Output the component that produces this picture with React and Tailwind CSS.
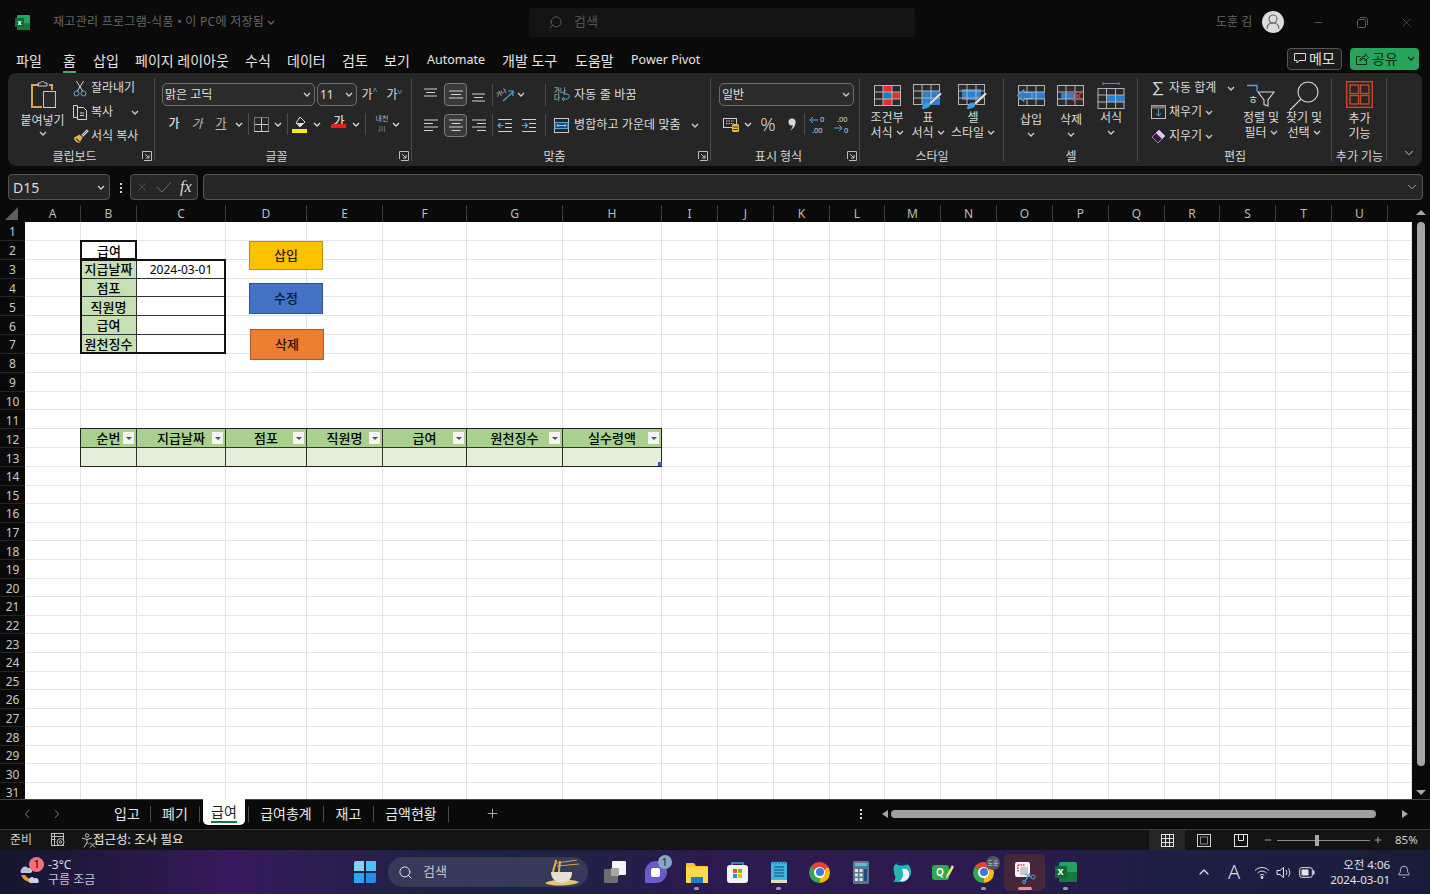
import React from 'react';
import { Search, Bell, ChevronUp, X, Minus, Plus, ChevronLeft, ChevronRight, ChevronDown } from 'lucide-react';

const Chev = ({ className = '' }) => (
  <svg width="8" height="5" viewBox="0 0 8 5" className={className} fill="none" stroke="currentColor" strokeWidth="1.3"><path d="M1 1l3 3 3-3" /></svg>
);
const Sep = ({ className = '' }) => <div className={`w-px h-[22px] bg-[#4c4c4c] shrink-0 ${className}`} />;
const Launcher = () => (
  <svg width="10" height="10" viewBox="0 0 10 10" className="absolute right-[3px] top-[5px]" fill="none" stroke="#bdbdbd"><path d="M.5 8V.5H9.5V9.5H2" /><path d="M3 3l4 4M7 4v3H4" /></svg>
);
const Slot = ({ w, children, className = '' }) => <div className={`flex items-center justify-center shrink-0 ${w} ${className}`}>{children}</div>;

function Group({ w, label, launcher, children, bodyClass = '', last }) {
  return (
    <div className={`shrink-0 h-full relative flex flex-col ${w}`}>
      <div className={`h-[73px] ${bodyClass}`}>{children}</div>
      <div className={`relative h-5 pt-px text-[12px] leading-[20px] text-center text-[#d6d6d6] ${launcher ? 'pr-[14px]' : ''}`}>{label}{launcher && <Launcher />}</div>
      {!last && <div className="absolute right-0 top-[5px] bottom-[5px] w-px bg-[#4a4a4a]" />}
    </div>
  );
}

const SmallRow = ({ icon, text, chev, chevClass = 'ml-2' }) => (
  <div className="h-6 flex items-center text-[12px] text-[#dcdcdc]">
    <Slot w="w-[20px]">{icon}</Slot>
    <span className="ml-px whitespace-nowrap">{text}</span>
    {chev && <Chev className={`text-[#cfcfcf] ${chevClass}`} />}
  </div>
);

const Select = ({ w, text, textClass = '' }) => (
  <div className={`${w} h-[23px] shrink-0 flex items-center justify-between pl-[2px] pr-[3px] border border-[#6d6d6d] rounded-[5px] bg-[#2c2c2c] text-[12px] text-[#e0e0e0]`}>
    <span className={textClass}>{text}</span><Chev className="text-[#d0d0d0]" />
  </div>
);

const Lines = ({ variant }) => {
  const map = {
    top: 'M1 3h13M3 6.500h9M1 10h13',
    mid: 'M1 5h14M3 8.500h10M1 12h14',
    bot: 'M1 8h13M3 11.500h9M1 15h13',
    left: 'M1 3h14M1 6.500h9M1 10h14M1 13.500h9',
    center: 'M1 3h14M3.500 6.500h9M1 10h14M3.500 13.500h9',
    right: 'M1 3h14M6 6.500h9M1 10h14M6 13.500h9',
  };
  return <svg width="16" height="17" viewBox="0 0 16 17" fill="none" stroke="#d2d2d2"><path d={map[variant]} /></svg>;
};
const Active = ({ children }) => <div className="w-[23px] h-[23px] ml-px shrink-0 flex items-center justify-center border border-[#7a7a7a] rounded-[4px] bg-[#3a3a3a]">{children}</div>;

const Indent = ({ dir }) => (
  <svg width="16" height="15" viewBox="0 0 16 15" fill="none"><path d="M1 1.500h14M8 5.500h7M8 9.500h7M1 13.500h14" stroke="#d2d2d2" /><path d={dir === 'l' ? 'M6.500 7.500H1M3.500 5L1 7.500 3.500 10' : 'M1 7.500h5.500M4 5l2.500 2.500L4 10'} stroke="#4fa8e0" strokeWidth="1.2" /></svg>
);

const GridBase = ({ w = 27, h = 21, x = 0, y = 0, children }) => (
  <g transform={`translate(${x} ${y})`}>
    <rect x=".5" y=".5" width={w - 1} height={h - 1} fill="#2a2a2a" stroke="#b4b4b4" />
    {children}
    {[1, 2].map(i => <path key={i} d={`M${(w * i) / 3} 0v${h}`} stroke="#b4b4b4" />)}
    {[1, 2].map(i => <path key={i} d={`M0 ${(h * i) / 3}h${w}`} stroke="#b4b4b4" />)}
  </g>
);
const Brush = () => <g><path d="M27 9.500L29 11 18 21.500 16 20z" fill="#e8e8e8" stroke="#444" strokeWidth=".5" /><path d="M9 26c0-4 2.500-7 6-6.500 2.500.5 3 3 1 4.500-2 1.500-4.500 2-7 2z" fill="#3e9be8" /></g>;

function RibbonIcon({ type }) {
  switch (type) {
    case 'cond': return <svg width="29" height="24" viewBox="0 0 29 24"><GridBase w={27} h={21} x={1} y={1}><path d="M9 1h9v6h8v7h-8v6H9v-6h9V7H9z" fill="#e62e2e" /><path d="M9 7h9v7H9z" fill="#2378c8" /></GridBase></svg>;
    case 'table': return <svg width="30" height="26" viewBox="0 0 30 26"><GridBase w={27} h={21} x={0} y={1}><path d="M9 7h18v14H9z" fill="#2a80d2" /></GridBase><Brush /></svg>;
    case 'style': return <svg width="30" height="26" viewBox="0 0 30 26"><GridBase w={27} h={21} x={0} y={1}><path d="M4 5h19v11H4z" fill="#2a80d2" /></GridBase><Brush /></svg>;
    case 'ins': return <svg width="30" height="24" viewBox="0 0 30 24"><GridBase w={27} h={21} x={2} y={1}><path d="M0 7h27v7H0z" fill="#2a80d2" /></GridBase><path d="M1 11.500l7-6v3h8v6H8v3z" fill="#2a80d2" stroke="#9fd0f5" strokeWidth=".6" /></svg>;
    case 'del': return <svg width="30" height="24" viewBox="0 0 30 24"><GridBase w={27} h={21} x={1} y={1}><path d="M4 8h14v6H4z" fill="#2a80d2" /></GridBase><path d="M17 7l10 10M27 7L17 17" stroke="#e23b3b" strokeWidth="1.4" /></svg>;
    case 'fmt': return <svg width="28" height="28" viewBox="0 0 28 28"><path d="M6 1.500h16M6 0v3M22 0v3" stroke="#3b97dd" /><GridBase w={27} h={21} x={.5} y={6}><path d="M9 7h18v7H9z" fill="#2a80d2" /></GridBase></svg>;
    case 'sort': return <svg width="30" height="24" viewBox="0 0 30 24" className="overflow-visible"><path d="M1 1.500h10v6" fill="none" stroke="#4fa8e0" strokeWidth="1.3" /><text x="2" y="20" fontSize="11" fill="#dcdcdc">ㅎ</text><path d="M12 8h16l-6 8v6l-4-1.500V16z" fill="none" stroke="#d8d8d8" strokeWidth="1.1" /></svg>;
    case 'find': return <svg width="30" height="30" viewBox="0 0 30 30" fill="none" stroke="#d8d8d8" strokeWidth="1.1"><circle cx="19" cy="11" r="10" /><path d="M12 18L1 29" /></svg>;
    case 'addin': return <svg width="27" height="27" viewBox="0 0 27 27" fill="none" stroke="#c8492a" strokeWidth="1.4"><rect x=".7" y=".7" width="25.600" height="25.600" /><rect x="4" y="4" width="8.500" height="8.500" /><rect x="14.500" y="4" width="8.500" height="8.500" /><rect x="4" y="14.500" width="8.500" height="8.500" /><rect x="14.500" y="14.500" width="8.500" height="8.500" /></svg>;
    default: return null;
  }
}

const BigBtn = ({ w, icon, l1, l2, chev, iconH = 'h-[27px]', top = 'mt-px' }) => (
  <div className={`${w} shrink-0 flex flex-col items-center text-[12px] leading-[15px] text-[#dcdcdc]`}>
    <div className={`${iconH} flex items-center justify-center`}>{icon}</div>
    <div className={`whitespace-nowrap ${top}`}>{l1}</div>
    <div className="whitespace-nowrap flex items-center gap-[3px] h-[15px]">{l2}{chev && <Chev className="text-[#cfcfcf]" />}</div>
  </div>
);

function Ribbon() {
  return (
    <div className="mx-2 w-[1414px] h-[93px] shrink-0 flex rounded-[8px] bg-[#262626]">
      <Group w="w-[147px]" label="클립보드" launcher bodyClass="flex pl-[12px] pt-[3px]">
        <div className="w-[45px] flex flex-col items-center text-[12px] text-[#dcdcdc]">
          <svg width="28" height="29" viewBox="0 0 28 29" className="mt-[5px] ml-[2px]" fill="none"><path d="M9 4H2v22h10" stroke="#d9a548" strokeWidth="2" /><path d="M19 4h3v5" stroke="#d9a548" strokeWidth="2" /><path d="M8 5V2h2.500c0-2 4-2 4 0H17v3z" stroke="#c8c8c8" /><rect x="13.500" y="10.500" width="12" height="16" fill="#2b2b2b" stroke="#c8c8c8" /></svg>
          <span className="mt-[3px] leading-[15px] whitespace-nowrap">붙여넣기</span>
          <Chev className="mt-[3px] text-[#cfcfcf]" />
        </div>
        <div className="ml-[5px]">
          <SmallRow text="잘라내기" icon={<svg width="14" height="17" viewBox="0 0 14 17" fill="none"><path d="M3.500 1l6 10M10.500 1l-6 10" stroke="#d8d8d8" /><circle cx="3.500" cy="13.500" r="2.500" stroke="#62a9e6" /><circle cx="10.500" cy="13.500" r="2.500" stroke="#62a9e6" /></svg>} />
          <SmallRow text="복사" chev chevClass="ml-[18px]" icon={<svg width="15" height="15" viewBox="0 0 15 15" fill="none" stroke="#d4d4d4"><path d="M4.500 2.500v-2h-4v12h4" /><path d="M4.500 2.500h6l3 3v9h-9z" /><path d="M7 8h4M7 10.500h4" /></svg>} />
          <SmallRow text="서식 복사" icon={<svg width="17" height="15" viewBox="0 0 16 14" fill="none"><path d="M9 6l5-5 1 1-5 5" stroke="#d6d6d6" /><path d="M2 8l5-3 3 3-3 5c-3 0-5-2-5-5z" fill="#e8b23c" /><path d="M4 9l3 3" stroke="#222" /></svg>} />
        </div>
      </Group>

      <Group w="w-[257px]" label="글꼴" launcher bodyClass="pl-[7px] pt-[10px]">
        <div className="flex items-center">
          <Select w="w-[153px]" text="맑은 고딕" />
          <Select w="w-[40px] ml-[2px]" text="11" />
          <Slot w="w-[25px]" className="text-[12px] text-[#dcdcdc]">가<span className="text-[9px] text-[#62b4ee] -mt-2">^</span></Slot>
          <Slot w="w-[25px]" className="text-[12px] text-[#dcdcdc]">가<span className="text-[9px] text-[#62b4ee] -mt-2 rotate-180">^</span></Slot>
        </div>
        <div className="flex items-center h-6 mt-[6px] text-[12px] text-[#dcdcdc]">
          <Slot w="w-[24px]" className="font-medium">가</Slot>
          <Slot w="w-[22px]" className="italic text-[#bdbdbd]">가</Slot>
          <Slot w="w-[26px]" className="underline text-[#bdbdbd]">가</Slot>
          <Slot w="w-[10px]"><Chev /></Slot>
          <Sep className="ml-[4px]" />
          <Slot w="w-[24px]"><svg width="15" height="15" viewBox="0 0 15 15" fill="none" stroke="#c8c8c8"><rect x=".5" y=".5" width="14" height="14" strokeDasharray="1 1" /><path d="M7.500 1v13M1 7.500h13" /><path d="M0 14.500h15" /></svg></Slot>
          <Slot w="w-[10px]"><Chev /></Slot>
          <Sep className="ml-[4px]" />
          <Slot w="w-[24px]"><svg width="16" height="17" viewBox="0 0 16 17" fill="none"><path d="M8 1l5 5-5 5-4-4z" stroke="#dcdcdc" /><path d="M5 7h7l-4 4z" fill="#dcdcdc" /><rect y="13" width="15" height="4" fill="#f7e816" /></svg></Slot>
          <Slot w="w-[10px]"><Chev /></Slot>
          <Slot w="w-[24px]" className="ml-[5px] relative"><span className="font-medium -mt-[5px]">가</span><span className="absolute left-[4px] bottom-[3px] w-[15px] h-[4px] bg-[#ef1c1c]" /></Slot>
          <Slot w="w-[10px]"><Chev /></Slot>
          <Sep className="ml-[4px]" />
          <Slot w="w-[16px]" className="ml-[8px] flex-col text-[7px] leading-[10px] text-[#bcbcbc]"><span>내천</span><span className="text-[#62a9e6]">川</span></Slot>
          <Slot w="w-[10px]" className="ml-px"><Chev /></Slot>
        </div>
      </Group>

      <Group w="w-[299px]" label="맞춤" launcher bodyClass="pl-[7px] pt-[10px]">
        <div className="flex items-center h-[23px]">
          <Slot w="w-[24px]"><Lines variant="top" /></Slot>
          <Active><Lines variant="mid" /></Active>
          <Slot w="w-[24px]"><Lines variant="bot" /></Slot>
          <Sep className="ml-px" />
          <Slot w="w-[24px]"><svg width="17" height="14" viewBox="0 0 17 14" fill="none" className="overflow-visible"><text x="0" y="8" fontSize="6" fill="#d4d4d4" transform="rotate(-30 3 8)">가나</text><path d="M6 13L16 4M11 3h5v5" stroke="#4fa8e0" strokeWidth="1.200" /></svg></Slot>
          <Slot w="w-[10px]" className="-ml-px text-[#cfcfcf]"><Chev /></Slot>
          <Sep className="ml-[19px]" />
          <Slot w="w-[25px]" className="ml-[3px]"><svg width="16" height="15" viewBox="0 0 16 15" fill="none" className="overflow-visible"><text x="0" y="6" fontSize="6.500" fill="#d4d4d4">가나</text><text x="0" y="13" fontSize="6.500" fill="#d4d4d4">다</text><path d="M8 12h5c3 0 3-5 0-5H9M10 10l-2 2 2 2" stroke="#4fa8e0" /></svg></Slot>
          <span className="text-[12px] text-[#dcdcdc] whitespace-nowrap tracking-[0.2px]">자동 줄 바꿈</span>
        </div>
        <div className="flex items-center h-6 mt-[7px]">
          <Slot w="w-[24px]"><Lines variant="left" /></Slot>
          <Active><Lines variant="center" /></Active>
          <Slot w="w-[24px]"><Lines variant="right" /></Slot>
          <Sep className="ml-px" />
          <Slot w="w-[24px]"><Indent dir="l" /></Slot>
          <Slot w="w-[24px]"><Indent dir="r" /></Slot>
          <Sep className="ml-[4px]" />
          <Slot w="w-[25px]" className="ml-[3px]"><svg width="15" height="15" viewBox="0 0 15 15" fill="none"><rect x=".5" y=".5" width="14" height="14" stroke="#c8c8c8" /><rect x="1" y="4.500" width="13" height="6" fill="#1c4a70" stroke="#4fa8e0" /><path d="M3 7.500h9M4.500 6L3 7.500 4.500 9M10.500 6L12 7.500 10.500 9" stroke="#8fc9f0" /></svg></Slot>
          <span className="text-[12px] text-[#dcdcdc] whitespace-nowrap tracking-[0.1px]">병합하고 가운데 맞춤</span>
          <Chev className="ml-[10px] text-[#cfcfcf]" />
        </div>
      </Group>

      <Group w="w-[149px]" label="표시 형식" launcher bodyClass="pl-[8px] pt-[10px]">
        <Select w="w-[135px]" text="일반" />
        <div className="flex items-center h-6 mt-[6px] text-[#d8d8d8]">
          <Slot w="w-[24px]"><svg width="17" height="15" viewBox="0 0 17 15" fill="none"><rect x=".5" y="1.500" width="13" height="9" stroke="#cfcfcf" /><path d="M3 4h8M3 6.500h8" stroke="#cfcfcf" strokeDasharray="1.500 1" /><rect x="9" y="7" width="7" height="8" rx="1.500" fill="#e9b949" /><path d="M10 10h5M10 12.500h5" stroke="#333" /></svg></Slot>
          <Slot w="w-[10px]"><Chev /></Slot>
          <Slot w="w-[24px]" className="ml-[3px] text-[19px] font-light">%</Slot>
          <Slot w="w-[24px]"><svg width="8" height="13" viewBox="0 0 8 13"><circle cx="4" cy="4" r="3.500" fill="#d8d8d8" /><path d="M7.500 4c0 4-2 7-5.500 8.500C4.500 10 5 8 5 6z" fill="#d8d8d8" /></svg></Slot>
          <Sep />
          <Slot w="w-[24px]" className="ml-px"><svg width="19" height="17" viewBox="0 0 19 17" fill="none" className="overflow-visible"><path d="M9 4H1M4 1L1 4l3 3" stroke="#4fa8e0" /><text x="11" y="6" fontSize="7.500" fill="#d4d4d4">0</text><text x="3" y="17" fontSize="7.500" fill="#d4d4d4">.00</text></svg></Slot>
          <Slot w="w-[24px]"><svg width="19" height="17" viewBox="0 0 19 17" fill="none" className="overflow-visible"><text x="4" y="6" fontSize="7.500" fill="#d4d4d4">.00</text><path d="M1 12h8M6 9l3 3-3 3" stroke="#4fa8e0" /><text x="11" y="17" fontSize="7.500" fill="#d4d4d4">0</text></svg></Slot>
        </div>
      </Group>

      <Group w="w-[144px]" label="스타일" bodyClass="flex pl-[6px] pt-[9px]">
        <BigBtn w="w-[42px]" icon={<RibbonIcon type="cond" />} l1="조건부" l2="서식" chev />
        <BigBtn w="w-[40px]" icon={<RibbonIcon type="table" />} l1="표" l2="서식" chev />
        <BigBtn w="w-[50px]" icon={<RibbonIcon type="style" />} l1="셀" l2="스타일" chev />
      </Group>

      <Group w="w-[134px]" label="셀" bodyClass="flex pl-[7px] pt-[9px]">
        <BigBtn w="w-[40px]" icon={<RibbonIcon type="ins" />} l1="삽입" l2={null} chev top="mt-[3px]" />
        <BigBtn w="w-[40px]" icon={<RibbonIcon type="del" />} l1="삭제" l2={null} chev top="mt-[3px]" />
        <BigBtn w="w-[40px]" icon={<RibbonIcon type="fmt" />} l1="서식" l2={null} chev />
      </Group>

      <Group w="w-[194px]" label="편집" bodyClass="flex pl-[10px] pt-[3px]">
        <div className="w-[91px]">
          <SmallRow text="자동 합계" chev chevClass="ml-[11px]" icon={<span className="text-[17px] leading-none text-[#d8d8d8]">∑</span>} />
          <SmallRow text="채우기" chev chevClass="ml-[3px]" icon={<svg width="15" height="14" viewBox="0 0 15 14" fill="none"><rect x=".5" y=".5" width="14" height="13" stroke="#bdbdbd" /><path d="M.5 .5h14v3H.5z" fill="#777" /><path d="M7.500 4v7M5 8.500l2.500 2.500L10 8.500" stroke="#4fa8e0" /></svg>} />
          <SmallRow text="지우기" chev chevClass="ml-[3px]" icon={<svg width="15" height="15" viewBox="0 0 15 15" fill="none"><path d="M1 8l7-7 6 6-7 7z" stroke="#c766d6" /><path d="M5 4l3-3 6 6-3 3z" fill="#e8c6ee" /></svg>} />
        </div>
        <div className="flex pt-[6px]">
          <BigBtn w="w-[44px]" icon={<RibbonIcon type="sort" />} l1="정렬 및" l2="필터" chev />
          <BigBtn w="w-[42px]" icon={<RibbonIcon type="find" />} l1="찾기 및" l2="선택" chev />
        </div>
      </Group>

      <Group w="w-[55px]" label="추가 기능" bodyClass="flex flex-col items-center pt-[8px]">
        <RibbonIcon type="addin" />
        <div className="text-[12px] leading-[15px] text-center text-[#dcdcdc] mt-[3px]">추가<br />기능</div>
      </Group>
      <div className="flex-1 flex items-end justify-end pr-[6px] pb-[6px]"><ChevronDown size={14} strokeWidth={1.5} className="text-[#dcdcdc]" /></div>
    </div>
  );
}

const colNames = ['', 'A', 'B', 'C', 'D', 'E', 'F', 'G', 'H', 'I', 'J', 'K', 'L', 'M', 'N', 'O', 'P', 'Q', 'R', 'S', 'T', 'U', ''];
const dark = 'border-r border-b border-[#333]';
const label = 'font-medium text-[13px] pt-[2px]';
const cellData = {
  B2: { t: '급여', c: `bg-white ${label}` },
  B3: { t: '지급날짜', c: `bg-[#c6e0b4] ${label} ${dark}` },
  B4: { t: '점포', c: `bg-[#c6e0b4] ${label} ${dark}` },
  B5: { t: '직원명', c: `bg-[#c6e0b4] ${label} ${dark}` },
  B6: { t: '급여', c: `bg-[#c6e0b4] ${label} ${dark}` },
  B7: { t: '원천징수', c: `bg-[#c6e0b4] ${label} ${dark}` },
  C3: { t: '2024-03-01', c: `bg-white text-[12px] pt-[2px] ${dark}` },
  C4: { t: '', c: `bg-white ${dark}` },
  C5: { t: '', c: `bg-white ${dark}` },
  C6: { t: '', c: `bg-white ${dark}` },
  C7: { t: '', c: `bg-white ${dark}` },
};
['순번', '지급날짜', '점포', '직원명', '급여', '원천징수', '실수령액'].forEach((t, i) => {
  const col = 'BCDEFGH'[i];
  cellData[`${col}12`] = { t, c: `bg-[#a9d08e] ${label} ${dark}`, filter: true };
  cellData[`${col}13`] = { t: '', c: `bg-[#e2efda] ${dark}` };
});

const Filter = () => (
  <span className="absolute right-[2px] top-[3px] w-[11px] h-[12px] bg-[#f4f4f4] flex items-center justify-center">
    <span className="w-0 h-0 border-l-[3px] border-r-[3px] border-t-[3px] border-l-transparent border-r-transparent border-t-[#555]" />
  </span>
);

function Sheet() {
  const rows = Array.from({ length: 31 }, (_, i) => i + 1);
  return (
    <div className="flex-1 h-full relative overflow-hidden grid grid-cols-[25px_56px_56px_89px_81px_76px_84px_96px_99px_56px_56px_56px_55px_56px_56px_56px_56px_56px_55px_56px_56px_56px_24px] grid-rows-[17px_repeat(13,18.85px)_repeat(18,18.6px)]">
      {colNames.map((n, c) => (
        <div key={c} style={{ gridColumn: c + 1, gridRow: 1 }} className={`flex items-center justify-center text-[12px] text-[#bdbdbd] bg-[#0a0a0a] ${c > 0 && c < 22 ? 'border-r border-[#3c3c3c]' : ''}`}>
          {c === 0 ? <svg width="14" height="13" viewBox="0 0 14 13" className="ml-[-2px]"><path d="M13 0v13H0z" fill="#5f5f5f" /></svg> : n}
        </div>
      ))}
      {rows.map(r => colNames.map((n, c) => {
        if (c === 0) return <div key={`${r}-h`} style={{ gridColumn: 1, gridRow: r + 1 }} className="flex items-center justify-center pt-[3px] text-[12px] text-[#c8c8c8] bg-[#0a0a0a] border-b border-[#242424]">{r}</div>;
        const d = cellData[`${n}${r}`];
        return (
          <div key={`${r}-${c}`} style={{ gridColumn: c + 1, gridRow: r + 1 }} className={`relative flex items-center justify-center text-black ${d ? d.c : 'bg-white border-r border-b border-[#e4e4e4]'}`}>
            {d && d.t}{d && d.filter && <Filter />}
          </div>
        );
      }))}
      <div style={{ gridColumn: '3 / 4', gridRow: '3 / 4' }} className="z-10 -ml-px -mt-px border-2 border-[#111]" />
      <div style={{ gridColumn: '3 / 5', gridRow: '4 / 9' }} className="z-10 -ml-px -mt-px border-2 border-[#111]" />
      <div style={{ gridColumn: '3 / 10', gridRow: '13 / 15' }} className="z-10 -ml-px -mt-px border border-[#222]" />
      <span className="absolute z-20 left-[658px] top-[257px] w-[4px] h-[4px] bg-[#3a55a5]" />
      <div className="absolute left-[249px] top-[36px] w-[74px] h-[29px] z-20 flex items-center justify-center bg-[#ffc000] border border-[#bf9000] text-[13px] font-medium text-[#2a2000]">삽입</div>
      <div className="absolute left-[249px] top-[78px] w-[74px] h-[31px] z-20 flex items-center justify-center bg-[#4472c4] border border-[#2f528f] text-[13px] font-medium text-[#0a1530]">수정</div>
      <div className="absolute left-[250px] top-[124px] w-[74px] h-[31px] z-20 flex items-center justify-center bg-[#ed7d31] border border-[#ae5a21] text-[13px] font-medium text-[#2a1000]">삭제</div>
    </div>
  );
}

function VScroll() {
  return (
    <div className="w-[18px] h-full flex flex-col items-center bg-[#0a0a0a]">
      <span className="mt-[5px] w-0 h-0 border-l-[5px] border-r-[5px] border-b-[5px] border-l-transparent border-r-transparent border-b-[#a8a8a8]" />
      <span className="mt-[7px] w-[8px] h-[544px] rounded-full bg-[#a6a6a6]" />
      <span className="mt-[24px] w-0 h-0 border-l-[5px] border-r-[5px] border-t-[5px] border-l-transparent border-r-transparent border-t-[#a8a8a8]" />
    </div>
  );
}

function Tabs() {
  const TabSep = ({ className = '' }) => <span className={`w-px h-[16px] bg-[#4c4c4c] shrink-0 ${className}`} />;
  const T = ({ w, children }) => <span className={`${w} shrink-0 text-center text-[14px] text-[#e6e6e6] -mt-[1px]`}>{children}</span>;
  return (
    <div className="h-[30px] shrink-0 flex items-center pb-[2px] bg-[#0a0a0a] border-t border-[#444]">
      <ChevronLeft size={14} strokeWidth={1.2} className="ml-[20px] text-[#b0b0b0]" />
      <ChevronRight size={14} strokeWidth={1.2} className="ml-[16px] text-[#b0b0b0]" />
      <div className="flex items-center ml-[44px] h-full">
        <T w="w-[42px] pr-[4px]">입고</T><TabSep />
        <T w="w-[48px]">폐기</T><TabSep />
        <div className="self-start -mt-px ml-[3px] w-[42px] h-[26px] bg-white rounded-b-[5px] flex flex-col items-center text-[14px] text-[#222] leading-[19px] pt-[3px]">
          급여<span className="block w-[26px] h-[2px] bg-[#107c41]" />
        </div>
        <TabSep className="ml-[3px]" />
        <T w="w-[74px]">급여총계</T><TabSep />
        <T w="w-[49px]">재고</T><TabSep />
        <T w="w-[74px]">금액현황</T><TabSep />
      </div>
      <Plus size={15} strokeWidth={1.2} className="ml-[36px] text-[#d8d8d8]" />
      <span className="ml-[360px] flex flex-col gap-[2px]"><i className="block w-[2px] h-[2px] bg-[#d8d8d8]" /><i className="block w-[2px] h-[2px] bg-[#d8d8d8]" /><i className="block w-[2px] h-[2px] bg-[#d8d8d8]" /></span>
      <span className="ml-[20px] w-0 h-0 border-t-[4px] border-b-[4px] border-r-[6px] border-t-transparent border-b-transparent border-r-[#a8a8a8]" />
      <span className="ml-[3px] w-[485px] h-[8px] rounded-full bg-[#a0a0a0]" />
      <span className="ml-[26px] w-0 h-0 border-t-[4px] border-b-[4px] border-l-[6px] border-t-transparent border-b-transparent border-l-[#a8a8a8]" />
    </div>
  );
}

function StatusBar() {
  return (
    <div className="h-[21px] shrink-0 flex items-center bg-[#141414] border-t border-[#3a3a3a] text-[12px] text-[#d0d0d0]">
      <span className="ml-[10px] w-[26px]">준비</span>
      <svg width="15" height="14" viewBox="0 0 15 14" className="ml-[15px]" fill="none" stroke="#c4c4c4"><rect x=".5" y=".5" width="12" height="12" /><path d="M.5 3.500h12M.5 6.500h4M3.500 .5v12" /><circle cx="9.500" cy="9" r="3.500" fill="#141414" /><circle cx="9.500" cy="9" r="1.200" /></svg>
      <svg width="15" height="15" viewBox="0 0 15 15" className="ml-[15px]" fill="none" stroke="#c4c4c4"><circle cx="6" cy="2.500" r="1.700" /><path d="M1 5l5 1.500L11 5M6 6.500v3l-3 5M6 9.500l2 2" /><path d="M9 9.500l5 5M14 9.500l-5 5" /></svg>
      <span className="-ml-[3px] w-[90px] text-[12.5px] font-medium whitespace-nowrap">접근성: 조사 필요</span>
      <div className="ml-[966px] w-[36px] h-[20px] bg-[#262626] flex items-center justify-center">
        <svg width="13" height="13" viewBox="0 0 13 13" fill="none" stroke="#e4e4e4"><rect x=".5" y=".5" width="12" height="12" /><path d="M4.500 0v13M8.500 0v13M0 4.500h13M0 8.500h13" /></svg>
      </div>
      <Slot w="w-[38px]"><svg width="14" height="13" viewBox="0 0 14 13" fill="none" stroke="#cfcfcf"><rect x=".5" y=".5" width="13" height="12" /><rect x="3.500" y="3" width="7" height="7" stroke="#888" /></svg></Slot>
      <Slot w="w-[36px]"><svg width="14" height="13" viewBox="0 0 14 13" fill="none" stroke="#e4e4e4"><rect x=".5" y=".5" width="13" height="12" /><path d="M4.500 .5v6h5v-6" /></svg></Slot>
      <Minus size={10} className="ml-[4px] text-[#bdbdbd]" />
      <div className="ml-[4px] w-[93px] h-[11px] relative flex items-center">
        <span className="w-full h-px bg-[#8a8a8a]" />
        <span className="absolute left-[38px] top-0 w-[4px] h-[11px] bg-[#a8a8a8]" />
      </div>
      <Plus size={10} className="ml-[3px] text-[#bdbdbd]" />
      <span className="ml-[12px] text-[11.5px]">85%</span>
    </div>
  );
}

const TaskIcon = ({ children, active, dot, dotClass = 'bg-[#9a9aa8] w-[5px]' }) => (
  <div className={`w-[41px] h-[37px] shrink-0 rounded-[5px] relative flex items-center justify-center ${active ? 'bg-[#47263a]' : ''}`}>
    {children}
    {dot && <span className={`absolute bottom-[1px] h-[3px] rounded-full ${dotClass}`} />}
  </div>
);
const Chrome = ({ s = 'w-[21px] h-[21px]', inner = 'w-[11px] h-[11px]', core = 'w-[8px] h-[8px]' }) => (
  <span className={`${s} rounded-full flex items-center justify-center bg-[conic-gradient(from_-60deg,#ea4335_0_120deg,#fbbc05_120deg_240deg,#34a853_240deg_360deg)]`}>
    <span className={`${inner} rounded-full bg-white flex items-center justify-center`}><span className={`${core} rounded-full bg-[#3b78e7]`} /></span>
  </span>
);

function Taskbar() {
  return (
    <div className="h-[44px] shrink-0 flex items-center bg-[linear-gradient(90deg,#14162e_0%,#2a1848_10%,#371a5e_16%,#1f2244_30%,#1b2345_36%,#2d1a50_50%,#2c1a50_68%,#1d1f44_82%,#191d3a_100%)] text-[#dcdce4]">
      <div className="relative ml-[17px] w-[27px] h-[30px] shrink-0">
        <svg width="26" height="26" viewBox="0 0 26 26" className="absolute left-0 top-[4px]"><path d="M4 9a4 4 0 0 1 7-2h3a3 3 0 0 1 0 5H4a2.500 2.500 0 0 1 0-3z" fill="#b7c4dc" /><path d="M4 14c3 7 10 9 15 5-5 0-9-2-11-5z" fill="#e89a2c" /><path d="M12 20a3 3 0 0 1 5-3h2a3 3 0 0 1 2 5h-8a2 2 0 0 1-1-2z" fill="#c8d3e6" /></svg>
        <span className="absolute left-[12px] top-0 w-[15px] h-[15px] rounded-full bg-[#f1707a] text-[10px] leading-[15px] text-center text-[#2a0a10] font-medium">1</span>
      </div>
      <div className="ml-[4px] w-[60px] text-[12px] leading-[15px] whitespace-nowrap"><div>-3°C</div><div className="text-[#c8c8d4]">구름 조금</div></div>
      <div className="ml-[246px] w-[22px] h-[22px] shrink-0 grid grid-cols-2 gap-[1.500px]">
        <i className="bg-[#7fd4f7] rounded-tl-[2px]" /><i className="bg-[#4ec0f4]" /><i className="bg-[#2ba7ee]" /><i className="bg-[#1e90e6] rounded-br-[2px]" />
      </div>
      <div className="ml-[12px] w-[200px] h-[30px] shrink-0 rounded-full bg-[#363a58] flex items-center pl-[10px] relative overflow-hidden">
        <Search size={15} strokeWidth={1.6} className="text-[#e6e6ee]" />
        <span className="ml-[10px] text-[13px] text-[#c4c4d0]">검색</span>
        <svg width="38" height="28" viewBox="0 0 38 28" className="absolute right-[7px] top-[1px]" fill="none"><path d="M2 25c6-4 28-4 34-1-4 4-28 5-34 1z" fill="#e8c376" /><path d="M8 14h21c0 7-4 11-10 11S8 21 8 14z" fill="#e6e0d4" /><path d="M10 14c1-6 3-8 3-12M16 14c0-5 1-8 1-11" stroke="#e8b23c" strokeWidth="2" /><path d="M14 5l20-3M14 8l22-2" stroke="#d9a24a" /></svg>
      </div>
      <div className="ml-[6px] flex items-center">
        <TaskIcon><span className="relative w-[22px] h-[22px] block"><i className="absolute left-0 bottom-0 w-[14px] h-[14px] bg-[#6f6f6f] rounded-[1px]" /><i className="absolute right-0 top-0 w-[14px] h-[14px] bg-[#f4f4f4] rounded-[1px]" /><i className="absolute left-[7px] top-[7px] w-[8px] h-[8px] bg-[#a8a8a8]" /></span></TaskIcon>
        <TaskIcon><span className="relative w-[22px] h-[22px] rounded-full rounded-bl-[3px] bg-[#6b5bc8] flex items-center justify-center"><i className="w-[9px] h-[9px] bg-white rounded-[2px]" /><span className="absolute -right-[5px] -top-[6px] w-[14px] h-[14px] rounded-full bg-[#7fa9c4] text-[10px] leading-[14px] text-center text-[#10202e] not-italic">1</span></span></TaskIcon>
        <TaskIcon dot><svg width="22" height="21" viewBox="0 0 22 21"><path d="M0 2a1 1 0 0 1 1-1h7l2 3h11a1 1 0 0 1 1 1v15a1 1 0 0 1-1 1H1a1 1 0 0 1-1-1z" fill="#f4c430" /><path d="M0 5h22v15a1 1 0 0 1-1 1H1a1 1 0 0 1-1-1z" fill="#fcd94f" /><rect x="5" y="15" width="12" height="6" fill="#1c7fc4" /></svg></TaskIcon>
        <TaskIcon><svg width="21" height="22" viewBox="0 0 21 22"><path d="M5 5V2h11v3" fill="none" stroke="#3aa4e8" strokeWidth="1.500" /><rect y="4" width="21" height="18" rx="3" fill="#f4f4f6" /><rect x="6" y="8" width="4" height="4" fill="#f25022" /><rect x="11" y="8" width="4" height="4" fill="#7fba00" /><rect x="6" y="13" width="4" height="4" fill="#00a4ef" /><rect x="11" y="13" width="4" height="4" fill="#ffb900" /></svg></TaskIcon>
        <TaskIcon dot><svg width="16" height="22" viewBox="0 0 16 22"><rect y="1" width="16" height="21" rx="1" fill="#3db5e6" /><rect y="19" width="16" height="3" fill="#e8dcc0" /><path d="M3 6h10M3 9h10M3 12h10M3 15h10" stroke="#0f4c6e" strokeWidth="1.200" /><path d="M2 0v3M5 0v3M8 0v3M11 0v3M14 0v3" stroke="#1c6a94" /></svg></TaskIcon>
        <TaskIcon><Chrome /></TaskIcon>
        <TaskIcon><svg width="16" height="23" viewBox="0 0 16 23"><rect width="16" height="23" rx="1.500" fill="#5f7588" /><rect x="2" y="2" width="12" height="3" fill="#4fc1e0" /><g fill="#d8e2ea"><rect x="2" y="8" width="3" height="3" /><rect x="6.500" y="8" width="3" height="3" /><rect x="2" y="12.500" width="3" height="3" /><rect x="6.500" y="12.500" width="3" height="3" /><rect x="2" y="17" width="3" height="3" /><rect x="6.500" y="17" width="3" height="3" /></g><rect x="11" y="8" width="3" height="12" fill="#1c4a80" /></svg></TaskIcon>
        <TaskIcon><svg width="20" height="22" viewBox="0 0 20 22"><path d="M2 5c3-5 12-6 16 1 3 6-1 14-7 15-3 .5-7-1-10 0 2-2 3-4 2-6C2 12 1 8 2 5z" fill="#1fb8b4" /><path d="M4 3c3-3 9-3 12 0-3 2-9 2-12 0z" fill="#122b6e" /><path d="M10 8c5-1 8 2 7 7-1 4-5 6-9 5 3-3 4-7 2-12z" fill="#f2f6f8" /></svg></TaskIcon>
        <TaskIcon><span className="w-[17px] h-[15px] rounded-[3px] bg-[#2fa84f] text-[10px] leading-[15px] text-center font-bold text-white">Q</span><svg width="8" height="14" viewBox="0 0 8 14" className="-ml-[3px]"><path d="M6 0l2 2-5 9-3 3 .5-4z" fill="#e8e070" /></svg></TaskIcon>
        <TaskIcon dot><span className="relative"><Chrome /><span className="absolute -right-[6px] -top-[6px] w-[14px] h-[14px] rounded-full bg-[#4d5560] text-[6px] leading-[14px] text-center text-[#d8d8d8]">도훈</span></span></TaskIcon>
        <TaskIcon active dot dotClass="bg-[#f08a9a] w-[14px]"><svg width="22" height="23" viewBox="0 0 22 23" fill="none"><rect x="1" y="1" width="15" height="15" rx="2" fill="#f4f4f6" /><path d="M4 4h7M4 4v7" stroke="#d03a3a" strokeWidth="1.500" strokeDasharray="1.500 1" /><rect x="6" y="6" width="8" height="8" fill="#c8c8d0" /><path d="M11 13l6 3M16 12l-5 8" stroke="#4aa8d8" strokeWidth="1.200" /><circle cx="19" cy="16" r="2" stroke="#4aa8d8" /><circle cx="10" cy="21" r="1.500" stroke="#4aa8d8" /></svg></TaskIcon>
        <TaskIcon dot><span className="relative w-[22px] h-[20px] flex items-center"><i className="absolute right-0 top-0 w-[18px] h-[20px] bg-[#21a366] rounded-[2px]" /><i className="absolute right-0 top-[10px] w-[18px] h-[10px] bg-[#107c41] rounded-b-[2px]" /><span className="relative w-[12px] h-[12px] bg-[#0e6b38] text-[9px] leading-[12px] text-center font-bold text-white rounded-[1px] not-italic">X</span></span></TaskIcon>
      </div>
      <ChevronUp size={16} strokeWidth={1.8} className="ml-[110px] text-[#e8e8f0]" />
      <span className="ml-[16px] text-[20px] font-light leading-none text-[#dcdce4]">A</span>
      <svg width="16" height="13" viewBox="0 0 16 13" className="ml-[14px]" fill="none" stroke="#e4e4ec"><path d="M1 4.500c4-4 10-4 14 0M3.500 7c3-2.500 6-2.500 9 0M5.800 9.300c1.500-1 3-1 4.400 0" /><circle cx="8" cy="11.500" r="1" fill="#e4e4ec" /></svg>
      <svg width="16" height="13" viewBox="0 0 16 13" className="ml-[6px]" fill="none" stroke="#e4e4ec"><path d="M1 4.500h3L7.500 1.500v10L4 8.500H1z" /><path d="M10 4c1 1.500 1 3.500 0 5M12.500 2.500c1.700 2.500 1.700 5.500 0 8" /></svg>
      <svg width="16" height="11" viewBox="0 0 16 11" className="ml-[7px]" fill="none"><rect x=".7" y=".7" width="12.600" height="9.600" rx="2" stroke="#e4e4ec" /><rect x="2.500" y="2.500" width="7" height="6" rx=".5" fill="#e4e4ec" /><rect x="14" y="3.500" width="1.500" height="4" fill="#e4e4ec" /></svg>
      <div className="ml-[5px] w-[70px] text-right text-[11.5px] leading-[15px] text-[#e4e4ec] whitespace-nowrap"><div>오전 4:06</div><div>2024-03-01</div></div>
      <Bell size={14} strokeWidth={1.3} className="ml-[7px] text-[#e4e4ec]" />
    </div>
  );
}

const menus = [['파일', 'w-[29px]'], ['홈', 'w-[12px]'], ['삽입', 'w-[24px]'], ['페이지 레이아웃', 'w-[92px]'], ['수식', 'w-[24px]'], ['데이터', 'w-[37px]'], ['검토', 'w-[24px]'], ['보기', 'w-[25px]'], ['Automate', 'w-[57px] text-[12.5px]'], ['개발 도구', 'w-[55px]'], ['도움말', 'w-[38px]'], ['Power Pivot', 'w-[69px] text-[12.5px]']];

export default function App() {
  return (
    <div className="w-[1430px] h-[894px] overflow-hidden flex flex-col bg-[#0a0a0a] font-['Noto_Sans','Noto_Sans_CJK_KR',sans-serif]">
      <div className="h-[44px] shrink-0 flex items-center text-[12px] text-[#666]">
        <span className="relative ml-[15px] w-[15px] h-[15px] shrink-0">
          <i className="absolute right-0 top-0 w-[13px] h-[15px] bg-[#21a366] rounded-[1px]" />
          <i className="absolute right-0 top-[8px] w-[13px] h-[7px] bg-[#107c41]" />
          <span className="absolute left-0 top-[3px] w-[9px] h-[9px] bg-[#0e6b38] text-[7px] leading-[9px] text-center font-bold text-white not-italic">x</span>
        </span>
        <span className="ml-[23px] whitespace-nowrap w-[213px] tracking-[0.28px]">재고관리 프로그램-식품 • 이 PC에 저장됨</span>
        <Chev className="ml-[1px] text-[#666]" />
        <div className="ml-[254px] w-[386px] h-[29px] rounded-[3px] bg-[#141414] flex items-center pl-[19px]">
          <Search size={15} strokeWidth={1.3} className="-scale-x-100 text-[#666]" />
          <span className="ml-[11px] text-[13px] text-[#555]">검색</span>
        </div>
        <span className="ml-[301px] whitespace-nowrap w-[38px]">도훈 김</span>
        <span className="ml-[8px] w-[22px] h-[22px] rounded-full bg-[#dcdcdc] flex items-center justify-center">
          <svg width="14" height="16" viewBox="0 0 14 16" fill="none" stroke="#666" strokeWidth="1.100"><circle cx="7" cy="5" r="4" /><path d="M1 15c0-4 2.500-6 6-6s6 2 6 6" /></svg>
        </span>
        <Minus size={11} className="ml-[29px] text-[#5a5a5a]" />
        <svg width="11" height="11" viewBox="0 0 11 11" className="ml-[33px]" fill="none" stroke="#5a5a5a"><rect x=".5" y="2.500" width="8" height="8" rx="1.500" /><path d="M3 .5h5a2.500 2.500 0 0 1 2.500 2.500v5" /></svg>
        <X size={15} strokeWidth={1.2} className="ml-[31px] text-[#5a5a5a]" />
      </div>

      <div className="h-[29px] shrink-0 flex items-center pl-[16px] relative">
        <div className="flex items-center gap-[18px] text-[14px] text-[#e4e4e4] pt-[3px]">
          {menus.map(([m, w], i) => (
            <span key={m} className={`relative whitespace-nowrap ${i === 0 ? 'text-left' : 'text-center'} ${w}`}>
              {m}{m === '홈' && <i className="absolute left-0 -bottom-[2px] w-[13px] h-[2px] bg-[#3fae6e]" />}
            </span>
          ))}
        </div>
        <div className="ml-auto flex items-center gap-[8px] pr-[11px]">
          <div className="w-[55px] h-[22px] border border-[#555] rounded-[4px] bg-[#1c1c1c] flex items-center justify-center gap-[3px] text-[14px] text-[#e0e0e0]">
            <svg width="12" height="11" viewBox="0 0 12 11" fill="none" stroke="#dcdcdc"><path d="M.5 .5h11v7H5L3 10V7.500H.5z" /></svg>메모
          </div>
          <div className="w-[69px] h-[22px] rounded-[4px] bg-[#27a55c] flex items-center pl-[6px] gap-[3px] text-[14px]">
            <svg width="13" height="12" viewBox="0 0 13 12" fill="none" stroke="#0d2a18"><path d="M4.500 3.500H.5v8h10V7" /><path d="M4 8c0-3 2-4.500 5-4.500V1l3.500 3.500L9 8V5.500C7 5.500 5 6 4 8z" /></svg>
            <span className="text-[#0d2a18]">공유</span><Chev className="ml-[6px] text-[#0d2a18]" />
          </div>
        </div>
      </div>

      <Ribbon />

      <div className="h-[39px] shrink-0 flex items-start pt-[8px] pl-[8px]">
        <div className="w-[102px] h-[26px] border border-[#555] rounded-[4px] bg-[#262626] flex items-center justify-between pl-[4px] pr-[4px] text-[14px] text-[#dcdcdc]">D15<Chev className="text-[#cfcfcf]" /></div>
        <span className="ml-[10px] mt-[9px] flex flex-col gap-[2px]"><i className="block w-[2px] h-[2px] bg-[#cfcfcf]" /><i className="block w-[2px] h-[2px] bg-[#cfcfcf]" /><i className="block w-[2px] h-[2px] bg-[#cfcfcf]" /></span>
        <div className="ml-[8px] w-[68px] h-[26px] border border-[#555] rounded-[4px] bg-[#262626] flex items-center pl-[4px]">
          <X size={14} strokeWidth={1} className="text-[#6a6a6a]" />
          <svg width="16" height="12" viewBox="0 0 16 12" className="ml-[7px]" fill="none" stroke="#6a6a6a"><path d="M1 6l5 5L15 1" /></svg>
          <span className="ml-[8px] text-[16px] italic font-['Liberation_Serif',serif] text-[#d8d8d8]">fx</span>
        </div>
        <div className="ml-[5px] w-[1220px] h-[26px] border border-[#555] rounded-[4px] bg-[#262626] flex items-center justify-end pr-[3px]"><ChevronDown size={14} strokeWidth={1.3} className="text-[#cfcfcf]" /></div>
      </div>

      <div className="h-[594px] shrink-0 flex">
        <Sheet />
        <VScroll />
      </div>

      <Tabs />
      <StatusBar />
      <Taskbar />
    </div>
  );
}
